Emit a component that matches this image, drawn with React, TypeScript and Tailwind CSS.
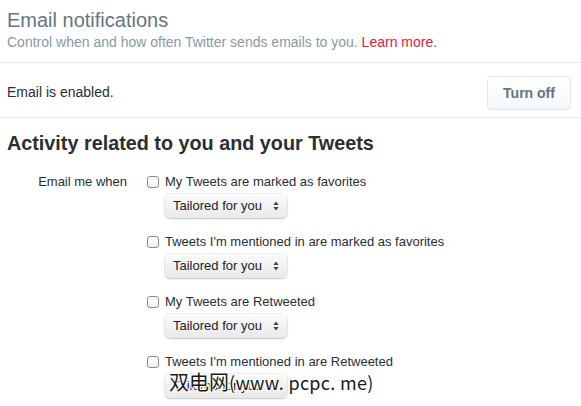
import React from "react";

function Checkbox() {
  return (
    <span className="block w-[12px] h-[12px] shrink-0 rounded-[3px] border border-[#8a8a8a] bg-gradient-to-b from-white to-[#f3f3f3]" />
  );
}

function Select() {
  return (
    <div className="mt-[3px] ml-[18px] h-[24px] w-[122px] rounded-[5px] bg-gradient-to-b from-[#fbfbfb] to-[#e9e9e9] shadow-[0_0_0_1px_rgba(0,0,0,0.06),0_1px_2px_rgba(0,0,0,0.18)] flex items-center justify-between pl-[8px] pr-[8px] text-[13px] text-[#222]">
      <span>Tailored for you</span>
      <svg width="6" height="10" viewBox="0 0 6 10">
        <path d="M3 0.5 L5.6 4 L0.4 4 Z" fill="#444" />
        <path d="M3 9.5 L5.6 6 L0.4 6 Z" fill="#444" />
      </svg>
    </div>
  );
}

function Option({ label }: { label: string }) {
  return (
    <div className="mb-[15px]">
      <div className="flex items-center gap-[6px] h-[18px] leading-[18px] text-[13px] text-[#292f33]">
        <Checkbox />
        <span>{label}</span>
      </div>
      <Select />
    </div>
  );
}

export default function App() {
  return (
    <div className="relative w-[581px] h-[406px] overflow-hidden bg-white font-['Liberation_Sans',Arial,sans-serif]">
      <div className="pl-[7px] pt-2 pb-[11px] border-b border-[#e1e8ed]">
        <h1 className="text-[20px] leading-6 text-[#66757f] font-normal">Email notifications</h1>
        <p className="mt-px text-[14px] leading-[18px] text-[#8899a6]">
          Control when and how often Twitter sends emails to you.{" "}
          <a className="text-[#e8173f]">Learn more.</a>
        </p>
      </div>

      <div className="flex justify-between items-start pl-[7px] pr-[10px] pt-[13px] pb-[7px] border-b border-[#e1e8ed]">
        <span className="mt-[7px] text-[14px] leading-[18px] text-[#292f33]">Email is enabled.</span>
        <button className="h-[34px] w-[84px] rounded-[4px] border border-[#e1e8ed] bg-gradient-to-b from-white to-[#f5f8fa] text-[14px] font-bold text-[#66757f]">
          Turn off
        </button>
      </div>

      <h2 className="mt-[13px] pl-[7px] text-[19.8px] leading-6 font-bold text-[#292f33]">
        Activity related to you and your Tweets
      </h2>

      <div className="mt-[18px] flex">
        <div className="w-[127px] shrink-0 text-right text-[13px] leading-[18px] text-[#292f33]">Email me when</div>
        <div className="ml-[20px]">
          <Option label="My Tweets are marked as favorites" />
          <Option label="Tweets I'm mentioned in are marked as favorites" />
          <Option label="My Tweets are Retweeted" />
          <Option label="Tweets I'm mentioned in are Retweeted" />
        </div>
      </div>

      <div className="absolute left-[169px] top-[370px] leading-[24px] text-[#1a1a1a] font-['Noto_Sans_CJK_SC','Liberation_Sans',sans-serif] [text-shadow:1px_1px_0_#fff,-1px_-1px_0_#fff,1px_-1px_0_#fff,-1px_1px_0_#fff]">
        <span className="text-[20px]">双电网</span>
        <span className="text-[18px] tracking-[0.3px]">(www. pcpc. me)</span>
      </div>
    </div>
  );
}
